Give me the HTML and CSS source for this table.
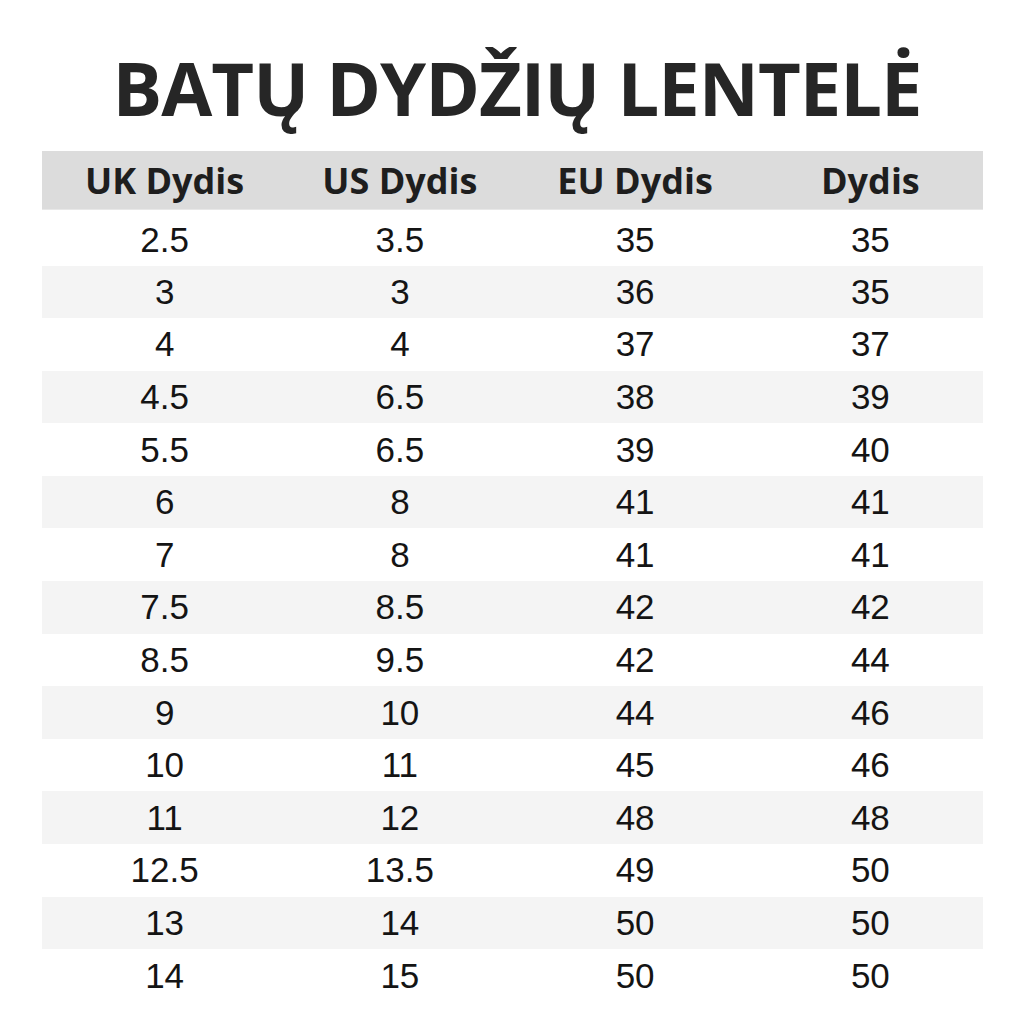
FILE: index.html
```html
<!DOCTYPE html>
<html lang="lt">
<head>
<meta charset="utf-8">
<title>Batų dydžių lentelė</title>
<link rel="stylesheet" href="styles.css">
</head>
<body>
<div class="page">
  <h1 class="title">BATŲ DYDŽIŲ LENTELĖ</h1>
  <table class="sizes">
    <thead>
      <tr><th>UK Dydis</th><th>US Dydis</th><th>EU Dydis</th><th>Dydis</th></tr>
    </thead>
    <tbody>
      <tr><td>2.5</td><td>3.5</td><td>35</td><td>35</td></tr>
      <tr><td>3</td><td>3</td><td>36</td><td>35</td></tr>
      <tr><td>4</td><td>4</td><td>37</td><td>37</td></tr>
      <tr><td>4.5</td><td>6.5</td><td>38</td><td>39</td></tr>
      <tr><td>5.5</td><td>6.5</td><td>39</td><td>40</td></tr>
      <tr><td>6</td><td>8</td><td>41</td><td>41</td></tr>
      <tr><td>7</td><td>8</td><td>41</td><td>41</td></tr>
      <tr><td>7.5</td><td>8.5</td><td>42</td><td>42</td></tr>
      <tr><td>8.5</td><td>9.5</td><td>42</td><td>44</td></tr>
      <tr><td>9</td><td>10</td><td>44</td><td>46</td></tr>
      <tr><td>10</td><td>11</td><td>45</td><td>46</td></tr>
      <tr><td>11</td><td>12</td><td>48</td><td>48</td></tr>
      <tr><td>12.5</td><td>13.5</td><td>49</td><td>50</td></tr>
      <tr><td>13</td><td>14</td><td>50</td><td>50</td></tr>
      <tr><td>14</td><td>15</td><td>50</td><td>50</td></tr>
    </tbody>
  </table>
</div>
</body>
</html>
```
FILE: styles.css
```css
html, body {
  margin: 0;
  padding: 0;
  background: #ffffff;
}
.page {
  width: 1024px;
  height: 1024px;
  overflow: hidden;
  padding: 0 42px;
  box-sizing: border-box;
}
.title {
  margin: 0;
  padding-top: 43px;
  padding-left: 10px;
  height: 151px;
  box-sizing: border-box;
  text-align: center;
  font-family: "Open Sans", "DejaVu Sans", sans-serif;
  font-weight: 700;
  font-size: 74px;
  line-height: 90px;
  letter-spacing: -1px;
  color: #262626;
  white-space: nowrap;
}
.sizes {
  width: 941px;
  border-collapse: collapse;
  table-layout: fixed;
}
.sizes th {
  background: #dcdcdc;
  height: 58px;
  padding: 0 0 0 10px;
  text-align: center;
  font-family: "Open Sans", Roboto, sans-serif;
  font-weight: 700;
  font-size: 36px;
  color: #1e1e1e;
  border-bottom: 1px solid #e8e8e8;
}
.sizes td {
  height: 52.6px;
  padding: 0 0 0 10px;
  text-align: center;
  font-family: "Liberation Sans", Arial, sans-serif;
  font-size: 35px;
  color: #141414;
}
.sizes tbody tr:first-child td {
  height: 56px;
  padding-top: 4px;
  box-sizing: border-box;
}
.sizes tbody tr:nth-child(even) td {
  background: #f4f4f4;
}
```
